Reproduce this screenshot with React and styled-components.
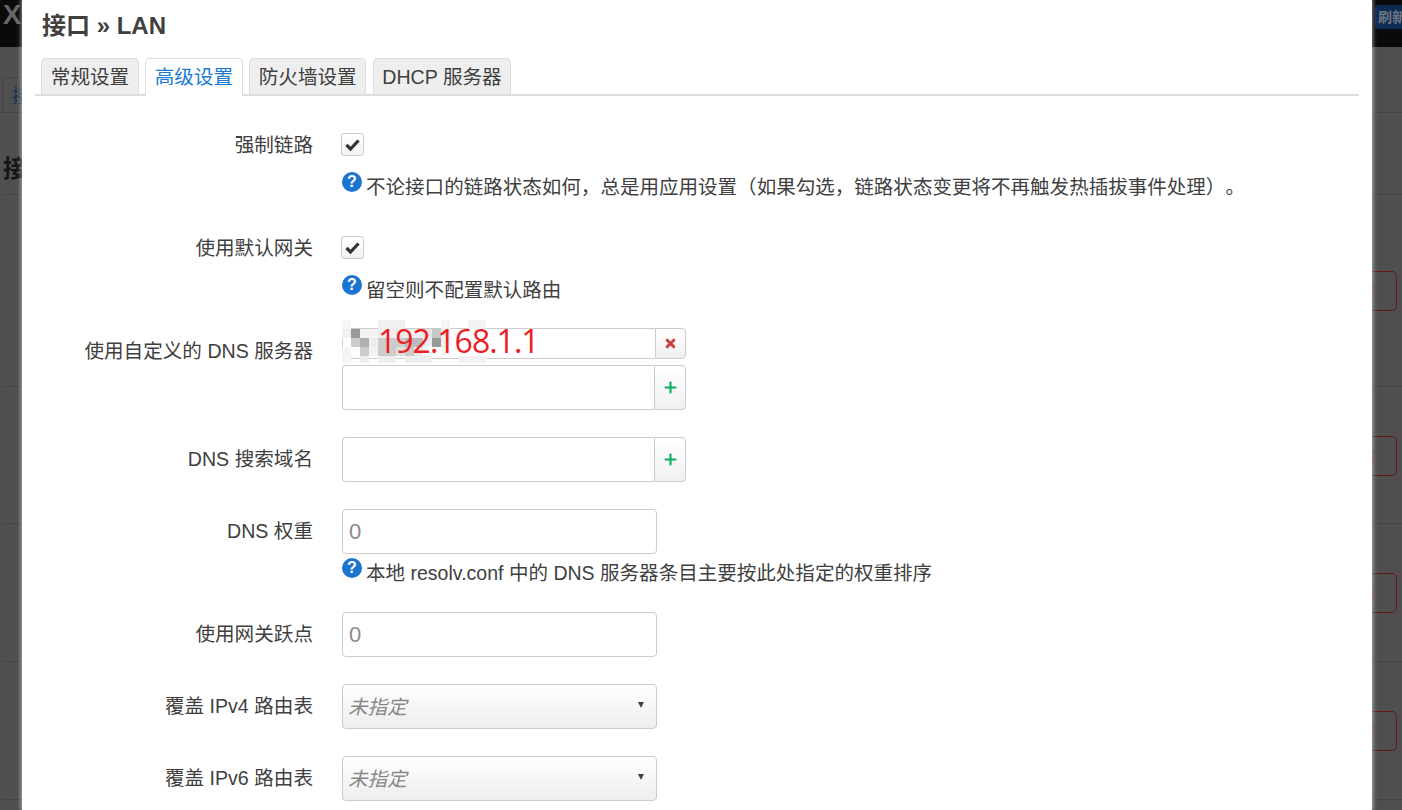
import React from "react";
import styled, { createGlobalStyle } from "styled-components";
import { Plus } from "lucide-react";

const FONT = `"Liberation Sans", "Noto Sans CJK SC", sans-serif`;

const Global = createGlobalStyle`
  html, body { margin: 0; padding: 0; height: 810px; overflow: hidden; background: #4f4f4f; font-family: ${FONT}; }
  * { box-sizing: border-box; }
`;

const Page = styled.div`
  position: relative;
  width: 1402px;
  height: 810px;
  overflow: hidden;
  background: #4f4f4f;
`;
const Header = styled.header`
  height: 47px;
  background: #0a0a0a;
  display: flex;
  justify-content: space-between;
  align-items: flex-start;
`;
const Brand = styled.div`
  color: #666;
  font-size: 27px;
  font-weight: 700;
  line-height: 31px;
  padding: 0 0 0 3px;
`;
const Refresh = styled.div`
  background: #0d2c55;
  color: #6d7480;
  font-size: 14px;
  font-weight: 700;
  height: 24px;
  line-height: 24px;
  width: 60px;
  margin: 5px -33px 0 0;
  padding-left: 3px;
  border-radius: 4px;
`;
const BackTabs = styled.div`
  height: 66px;
  padding: 30px 0 0 2px;
  border-bottom: 1px solid #444;
`;
const BackTab = styled.div`
  width: 60px;
  height: 36px;
  border: 1px solid #444;
  border-bottom: 0;
  border-radius: 4px 4px 0 0;
  color: #14335c;
  font-size: 19px;
  padding: 3px 0 0 9px;
`;
const BackTitle = styled.h2`
  margin: 0 0 0 3px;
  height: 82px;
  border-bottom: 1px solid #444;
  color: #141414;
  font-size: 24px;
  line-height: 112px;
`;
const BackRow = styled.div`
  height: ${(p) => p.$h}px;
  margin-left: 3px;
  display: flex;
  align-items: center;
  justify-content: flex-end;
  padding: 1px 5px 0 0;
  border-bottom: 1px solid #444;
`;
const BackButton = styled.div`
  width: 90px;
  height: 40px;
  border: 1px solid #641a12;
  border-radius: 5px;
  color: #6a2a24;
  font-size: 16px;
  line-height: 38px;
  padding-left: 35px;
`;

const Modal = styled.main`
  position: absolute;
  top: 0;
  left: 22px;
  width: 1350px;
  height: 810px;
  background: #fff;
  box-shadow: 0 0 4px 1px rgba(255, 255, 255, 0.55);
  padding: 0 13px;
  color: #404040;
  overflow: hidden;
`;
const Title = styled.h3`
  margin: 0;
  height: 58px;
  padding: 11px 0 0 7px;
  font-size: 24px;
  line-height: 30px;
  font-weight: 700;
  color: #404040;
`;
const Tabs = styled.nav`
  display: flex;
  gap: 6.6px;
  height: 38px;
  padding-left: 6.3px;
  border-bottom: 2px solid #ddd;
`;
const Tab = styled.div`
  height: ${(p) => (p.$active ? 38 : 36)}px;
  padding: 0 8.5px;
  font-size: 19.6px;
  line-height: 37px;
  border: 1px solid #ddd;
  border-bottom: 0;
  border-radius: 5px 5px 0 0;
  background: ${(p) => (p.$active ? "#fff" : "#eee")};
  color: ${(p) => (p.$active ? "#1b7ad2" : "#404040")};
`;
const Form = styled.section`
  padding-top: 37px;
`;
const Row = styled.div`
  display: grid;
  grid-template-columns: 278px 1fr;
  column-gap: 29px;
  margin-bottom: ${(p) => p.$gap}px;
`;
const Label = styled.label`
  text-align: right;
  font-size: 19.6px;
  line-height: ${(p) => p.$lh}px;
`;
const Field = styled.div`
  display: flex;
  flex-direction: column;
  align-items: flex-start;
  position: relative;
`;
const CheckBox = styled.span`
  width: 23px;
  height: 23px;
  margin-left: -1px;
  border: 1px solid #ccc;
  border-radius: 3px;
  background: linear-gradient(#fff, #f2f2f2);
  display: flex;
  align-items: center;
  justify-content: center;
`;
const Help = styled.div`
  display: flex;
  align-items: flex-start;
  gap: 4px;
  font-size: 19.55px;
  line-height: 30px;
  text-spacing-trim: space-all;
  margin-top: ${(p) => p.$top}px;
`;
const HelpIcon = styled.span`
  width: 20px;
  height: 20px;
  border-radius: 50%;
  background: #1b74d0;
  color: #fff;
  font-size: 16px;
  font-weight: 700;
  line-height: 20px;
  text-align: center;
  flex: none;
`;
const Group = styled.div`
  display: flex;
  width: 344px;
  height: ${(p) => p.$h}px;
  margin-bottom: ${(p) => p.$mb || 0}px;
`;
const GroupInput = styled.input`
  flex: 1;
  min-width: 0;
  height: 100%;
  border: 1px solid #ccc;
  border-right: 0;
  border-radius: 4px 0 0 4px;
  background: #fff;
  outline: 0;
`;
const GroupButton = styled.span`
  width: ${(p) => p.$w}px;
  height: 100%;
  border: 1px solid #ccc;
  border-radius: 0 4px 4px 0;
  background: linear-gradient(#fff, #f0f0f0);
  display: flex;
  align-items: center;
  justify-content: center;
  color: ${(p) => p.$color};
`;
const TextInput = styled.input`
  width: 315px;
  height: 45px;
  padding: 0 6px;
  border: 1px solid #ccc;
  border-radius: 4px;
  font: 22px ${FONT};
  outline: 0;
  &::placeholder { color: #8a8a8a; opacity: 1; }
`;
const Select = styled.div`
  width: 315px;
  height: 45px;
  padding: 0 12px 0 5px;
  border: 1px solid #ccc;
  border-radius: 4px;
  background: linear-gradient(#fff, #eee);
  display: flex;
  align-items: center;
  justify-content: space-between;
  color: #888;
  font-size: 19.6px;
  font-style: italic;
  line-height: 40px;
`;
const Caret = styled.span`
  width: 0;
  height: 0;
  border-left: 3.5px solid transparent;
  border-right: 3.5px solid transparent;
  border-top: 6.5px solid #404040;
  margin-top: -3px;
`;
const Mosaic = styled.svg`
  position: absolute;
  left: 0;
  top: -8px;
  pointer-events: none;
`;
const RedText = styled.span`
  position: absolute;
  left: 36px;
  top: -7px;
  color: #ee1c25;
  font-family: "Open Sans", sans-serif;
  font-size: 32px;
  line-height: 40px;
  letter-spacing: -1px;
  white-space: nowrap;
`;

const CELLS = [
  [0, 0, 0xf7], [4, 0, 0xf0], [5, 0, 0xf0], [6, 0, 0xf0], [11, 0, 0xf5], [14, 0, 0xf3], [15, 0, 0xf3],
  [0, 1, 0xf2], [1, 1, 0x99], [2, 1, 0xf2], [3, 1, 0xf4], [4, 1, 0xee], [5, 1, 0xee], [6, 1, 0xe8], [7, 1, 0xf0], [8, 1, 0xf0], [9, 1, 0xe8], [10, 1, 0xc8], [11, 1, 0xf0],
  [1, 2, 0xcc], [2, 2, 0xb0], [3, 2, 0xee], [4, 2, 0xcc], [5, 2, 0xcc], [6, 2, 0xcc], [7, 2, 0xbb], [8, 2, 0xbb], [9, 2, 0xee], [10, 2, 0x99], [11, 2, 0xee],
  [0, 3, 0xf4], [2, 3, 0xcc], [3, 3, 0xf2], [4, 3, 0xcc], [5, 3, 0xcc], [6, 3, 0xe0], [7, 3, 0xcc], [8, 3, 0xe8], [11, 3, 0xf5],
  [0, 4, 0xf5], [2, 4, 0xee], [4, 4, 0xee], [5, 4, 0xee], [7, 4, 0xee], [8, 4, 0xee], [9, 4, 0xee], [13, 4, 0xf2], [14, 4, 0xf2], [15, 4, 0xf2],
];

const HelpLine = ({ top, children }) => (
  <Help $top={top}>
    <HelpIcon>?</HelpIcon>
    <span>{children}</span>
  </Help>
);

const Tick = () => (
  <svg width="17" height="17" viewBox="0 0 17 17" fill="none">
    <path d="M2.5 9 L6.5 13 L14.5 4.5" stroke="#333" strokeWidth="3.2" />
  </svg>
);
const Cross = () => (
  <svg width="11" height="11" viewBox="0 0 11 11" fill="none">
    <path d="M2.2 2.2 L8.8 8.8 M8.8 2.2 L2.2 8.8" stroke="#c9403c" strokeWidth="3" strokeLinecap="round" />
  </svg>
);

export default function App() {
  return (
    <Page>
      <Global />
      <Header>
        <Brand>X</Brand>
        <Refresh>刷新</Refresh>
      </Header>
      <BackTabs>
        <BackTab>接口</BackTab>
      </BackTabs>
      <BackTitle>接口</BackTitle>
      <BackRow $h={192}><BackButton>删除</BackButton></BackRow>
      <BackRow $h={137}><BackButton>删除</BackButton></BackRow>
      <BackRow $h={138}><BackButton>删除</BackButton></BackRow>
      <BackRow $h={138}><BackButton>删除</BackButton></BackRow>

      <Modal>
        <Title>接口 » LAN</Title>
        <Tabs>
          <Tab>常规设置</Tab>
          <Tab $active>高级设置</Tab>
          <Tab>防火墙设置</Tab>
          <Tab>DHCP 服务器</Tab>
        </Tabs>
        <Form>
          <Row $gap={34}>
            <Label $lh={24}>强制链路</Label>
            <Field>
              <CheckBox><Tick /></CheckBox>
              <HelpLine top={16}>不论接口的链路状态如何，总是用应用设置（如果勾选，链路状态变更将不再触发热插拔事件处理）。</HelpLine>
            </Field>
          </Row>
          <Row $gap={23}>
            <Label $lh={24}>使用默认网关</Label>
            <Field>
              <CheckBox><Tick /></CheckBox>
              <HelpLine top={16}>留空则不配置默认路由</HelpLine>
            </Field>
          </Row>
          <Row $gap={27}>
            <Label $lh={46}>使用自定义的 DNS 服务器</Label>
            <Field>
              <Group $h={31} $mb={6}>
                <GroupInput />
                <GroupButton $w={31} $color="#c9302c"><Cross /></GroupButton>
              </Group>
              <Group $h={45}>
                <GroupInput />
                <GroupButton $w={32} $color="#0fae5b"><Plus size={17} strokeWidth={3} /></GroupButton>
              </Group>
              <Mosaic width="144" height="43" viewBox="0 0 144 43">
                {CELLS.map(([c, r, v]) => (
                  <rect key={`${c}-${r}`} x={c * 9} y={r * 9} width="9" height="9" fill={`rgb(${v},${v},${v})`} />
                ))}
              </Mosaic>
              <RedText>192.168.1.1</RedText>
            </Field>
          </Row>
          <Row $gap={27}>
            <Label $lh={44}>DNS 搜索域名</Label>
            <Field>
              <Group $h={45}>
                <GroupInput />
                <GroupButton $w={32} $color="#0fae5b"><Plus size={17} strokeWidth={3} /></GroupButton>
              </Group>
            </Field>
          </Row>
          <Row $gap={24}>
            <Label $lh={44}>DNS 权重</Label>
            <Field>
              <TextInput placeholder="0" />
              <HelpLine top={4}>本地 resolv.conf 中的 DNS 服务器条目主要按此处指定的权重排序</HelpLine>
            </Field>
          </Row>
          <Row $gap={27}>
            <Label $lh={44}>使用网关跃点</Label>
            <Field><TextInput placeholder="0" /></Field>
          </Row>
          <Row $gap={27}>
            <Label $lh={44}>覆盖 IPv4 路由表</Label>
            <Field><Select>未指定<Caret /></Select></Field>
          </Row>
          <Row $gap={27}>
            <Label $lh={44}>覆盖 IPv6 路由表</Label>
            <Field><Select>未指定<Caret /></Select></Field>
          </Row>
        </Form>
      </Modal>
    </Page>
  );
}
